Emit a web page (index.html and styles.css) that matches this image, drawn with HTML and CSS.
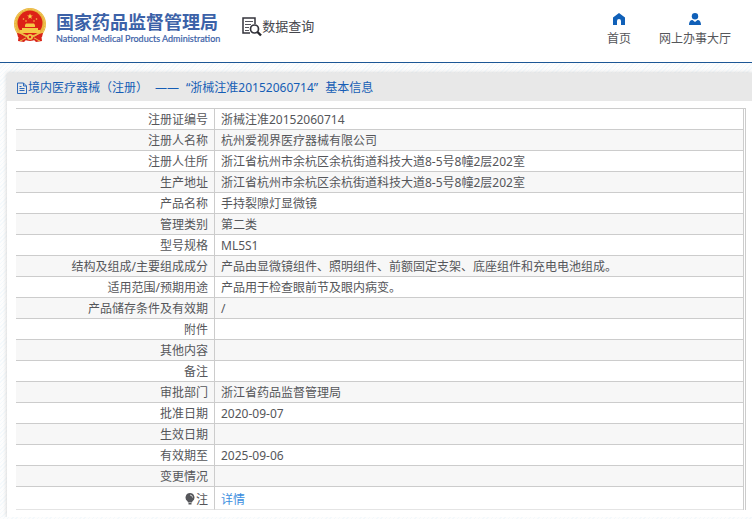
FILE: index.html
```html
<!DOCTYPE html>
<html lang="zh-CN">
<head>
<meta charset="utf-8">
<title>国家药品监督管理局 数据查询</title>
<link rel="stylesheet" href="styles.css">
</head>
<body>
<header class="top">
  <div class="brand">
    <svg class="emblem" viewBox="0 0 34 36" aria-hidden="true">
      <path d="M6 25l-1 8 6 1 2-2h8l2 2 6-1-1-8z" fill="#d92418"/>
      <circle cx="17" cy="16" r="16" fill="#e9b540"/>
      <circle cx="17" cy="16" r="15" fill="none" stroke="#f3cf62" stroke-dasharray="2 1"/>
      <circle cx="17" cy="15" r="12.500" fill="#dd2217"/>
      <path d="M17 5.500l.8 2h2.100l-1.700 1.300.6 2.100-1.800-1.300-1.800 1.300.6-2.100-1.700-1.300h2.100z" fill="#f8d64c"/>
      <g fill="#f5c945"><circle cx="10.500" cy="11" r=".8"/><circle cx="13" cy="13" r=".8"/><circle cx="21" cy="13" r=".8"/><circle cx="23.500" cy="11" r=".8"/>
      <path d="M12 17l1-1.500h8l1 1.500v2h-10zM9 20h16v2h2v3H7v-3h2z"/></g>
      <path d="M4 25c5 0 8 5 13 5s8-5 13-5l-1 4c-5 0-7 4-12 4S10 29 5 29z" fill="#d92418"/>
      <path d="M5 24c4 2 7 4 9 4M29 24c-4 2-7 4-9 4M7 33c3-1 5-3 6-3M27 33c-3-1-5-3-6-3" fill="none" stroke="#f0c24c"/>
      <circle cx="17" cy="29" r="3" fill="#f0c24c"/><circle cx="17" cy="29" r="1.200" fill="#d92418"/>
    </svg>
    <div class="names">
      <div class="zh">国家药品监督管理局</div>
      <div class="en">National Medical Products Administration</div>
    </div>
  </div>
  <div class="query">
    <svg class="query-icon" viewBox="0 0 20 20" aria-hidden="true">
      <path d="M8 16H1V1h12v6" fill="none" stroke="#34343c" stroke-width="1.500"/>
      <path d="M3 4.500h8M3 7.500h6M3 10.500h4M3 13.500h4" stroke="#55555d"/>
      <circle cx="12.500" cy="12" r="4" fill="#fff" stroke="#34343c" stroke-width="1.700"/>
      <path d="M15.500 15l3.500 3.500" stroke="#25252b" stroke-width="2.400"/>
    </svg>
    <span>数据查询</span>
  </div>
  <nav class="nav">
    <a href="#home">
      <svg viewBox="0 0 12 12" aria-hidden="true"><path d="M6 0l6 4.500V12H8V8a2 2 0 0 0-4 0v4H0V4.500z" fill="#1060b8"/></svg>
      <span>首页</span>
    </a>
    <a href="#hall">
      <svg viewBox="0 0 12 12" aria-hidden="true"><circle cx="6" cy="3.200" r="3.200" fill="#1060b8"/><path d="M0 12c0-3 1-5 3.500-5L6 9l2.500-2C11 7 12 9 12 12z" fill="#1060b8"/></svg>
      <span>网上办事大厅</span>
    </a>
  </nav>
</header>
<main class="panel">
  <h1 class="title">
    <svg class="doc" viewBox="0 0 10 12" aria-hidden="true"><path d="M.5 1h6L9.500 4v7.500h-9zM6.500 1v3h3M2.500 4.500h2M2.500 6.500h5M2.500 8.500h5" fill="none" stroke="#2b68bb"/></svg>
    <span class="words"><span>境内医疗器械（注册）</span> <span>——</span> <span>“浙械注准20152060714”</span> <span>基本信息</span></span>
  </h1>
  <div class="frame">
    <table class="info">
      <tbody>
        <tr><th scope="row">注册证编号</th><td>浙械注准20152060714</td></tr>
        <tr><th scope="row">注册人名称</th><td>杭州爱视界医疗器械有限公司</td></tr>
        <tr><th scope="row">注册人住所</th><td>浙江省杭州市余杭区余杭街道科技大道8-5号8幢2层202室</td></tr>
        <tr><th scope="row">生产地址</th><td>浙江省杭州市余杭区余杭街道科技大道8-5号8幢2层202室</td></tr>
        <tr><th scope="row">产品名称</th><td>手持裂隙灯显微镜</td></tr>
        <tr><th scope="row">管理类别</th><td>第二类</td></tr>
        <tr><th scope="row">型号规格</th><td>ML5S1</td></tr>
        <tr><th scope="row">结构及组成/主要组成成分</th><td>产品由显微镜组件、照明组件、前额固定支架、底座组件和充电电池组成。</td></tr>
        <tr><th scope="row">适用范围/预期用途</th><td>产品用于检查眼前节及眼内病变。</td></tr>
        <tr><th scope="row">产品储存条件及有效期</th><td>/</td></tr>
        <tr><th scope="row">附件</th><td></td></tr>
        <tr><th scope="row">其他内容</th><td></td></tr>
        <tr><th scope="row">备注</th><td></td></tr>
        <tr><th scope="row">审批部门</th><td>浙江省药品监督管理局</td></tr>
        <tr><th scope="row">批准日期</th><td>2020-09-07</td></tr>
        <tr><th scope="row">生效日期</th><td></td></tr>
        <tr><th scope="row">有效期至</th><td>2025-09-06</td></tr>
        <tr><th scope="row">变更情况</th><td></td></tr>
        <tr class="note"><th scope="row"><svg class="bulb" viewBox="0 0 10 12" aria-hidden="true"><path d="M5 0a4.500 4.500 0 0 1 2.500 8.200L7 9.500H3l-.5-1.300A4.500 4.500 0 0 1 5 0zM3.500 10h3v1.500h-3z" fill="#55565a"/><path d="M5 2a2.500 2.500 0 0 1 2.500 2.500" fill="none" stroke="#ccc"/></svg>注</th><td><a href="#detail">详情</a></td></tr>
      </tbody>
    </table>
  </div>
</main>
</body>
</html>
```
FILE: styles.css
```css
* { box-sizing: border-box; }
body {
  margin: 0;
  background: repeating-linear-gradient(135deg, #f4f9fc 0 1px, #fdfdfd 1px 3px);
  color: #55565a;
  font: 12px/20px "Noto Sans", "Noto Sans CJK SC", sans-serif;
}
a { text-decoration: none; }
svg { display: block; }
.top {
  display: flex;
  align-items: flex-start;
  height: 63px;
  padding: 8px 21px 0 13px;
  background: #fff;
  border-bottom: 1px solid #1c5796;
}
.brand { display: flex; gap: 9px; }
.emblem { width: 34px; height: 36px; }
.names { white-space: nowrap; color: #3c62a8; }
.zh { font: 700 18px/26px "Noto Sans CJK SC", sans-serif; }
.en { font: 9px/10px Lato, sans-serif; -webkit-text-stroke: 0.2px #3c62a8; }
.query {
  display: flex;
  margin: 8px 0 0 22px;
  color: #45464c;
  font: 13px/20px "Noto Sans CJK SC", sans-serif;
}
.query-icon { width: 20px; height: 20px; margin-top: 1px; }
.nav { display: flex; gap: 28px; margin-left: auto; padding-top: 5px; }
.nav a {
  display: flex;
  flex-direction: column;
  align-items: center;
  gap: 4px;
  color: #55565a;
}
.nav svg { width: 12px; height: 12px; }
.panel {
  margin: 10px 0 0 7px;
  padding-bottom: 7px;
  background: #fff;
  box-shadow: 0 0 4px #ccc;
}
.title {
  display: flex;
  align-items: center;
  gap: 1px;
  height: 28px;
  margin: 0;
  padding: 2px 10px 0;
  background: #e8e8e8;
  color: #155db5;
  font-size: 12px;
  font-weight: 400;
  white-space: nowrap;
}
.words { display: flex; gap: 7px; }
.doc { width: 10px; height: 12px; }
.frame {
  margin: 7px 6px 0 9px;
  border-top: 1px solid #ccc;
  border-right: 1px solid #ccc;
}
.info {
  width: calc(100% - 1px);
  border-collapse: separate;
  border-spacing: 0;
  border-right: 1px solid #ccc;
}
.info th, .info td {
  height: 21px;
  padding: 1px 6px 0;
  border-bottom: 1px solid #ccc;
  font-weight: 400;
  line-height: 19px;
  text-align: left;
}
.info th { width: 199px; border-right: 1px solid #ccc; text-align: right; }
.info tr:nth-child(even) { background: #f7f7f7; }
.info .note th, .info .note td { height: 23px; padding-top: 3px; border-bottom-color: #e4e4e4; }
.info a { color: #3b8ee0; }
.bulb { display: inline-block; width: 10px; height: 12px; margin-right: 1px; vertical-align: -1px; }
```
